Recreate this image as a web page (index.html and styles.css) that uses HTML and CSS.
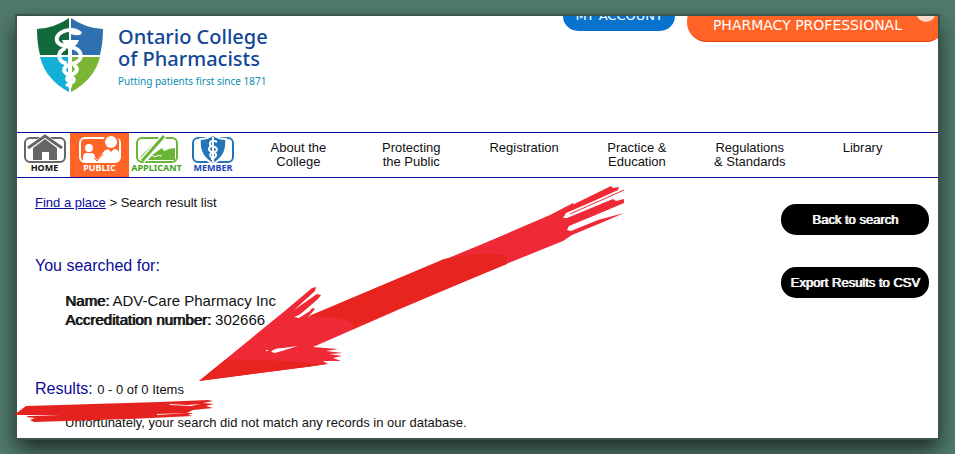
FILE: index.html
```html
<!DOCTYPE html>
<html lang="en">
<head>
    <meta charset="UTF-8">
    <meta name="viewport" content="width=device-width, initial-scale=1.0">
    <title>Search result list</title>
    <link rel="stylesheet" href="styles.css">
</head>
<body>
    <div class="sheet">
        <header class="header">
            <a class="logo" href="#">
                <svg class="shield" viewBox="0 0 66 74" width="66" height="74">
                    <path fill="#126a3c" d="M32 0V37H3Q0 25 0 11Q18 10 32 0Z"/>
                    <path fill="#2f70b0" d="M34 0V37H63Q66 25 66 11Q48 10 34 0Z"/>
                    <path fill="#12b0d6" d="M32 39V74Q9 62 3 39Z"/>
                    <path fill="#7ab536" d="M34 39V74Q57 62 63 39Z"/>
                    <path fill="#fff" d="M25 22H42Q40 28 35 29V68L33 74L31 68V29Q27 28 25 22Z"/>
                    <g fill="none" stroke="#fff" stroke-linecap="round">
                        <path stroke-width="4" d="M42 15C38 10 24 11 20 19C18 26 26 28 33 29C47 31 47 43 35 46C24 49 25 55 34 57"/>
                        <path stroke-width="4" d="M27 31C20 34 21 43 28 45M38 48C42 51 39 56 33 57"/>
                        <path stroke-width="3" d="M33 57C27 60 30 64 35 64M34 59Q40 61 35 65L30 67"/>
                    </g>
                    <path fill="#fff" d="M31 12Q41 9 45 15Q42 19 34 16Z"/>
                </svg>
                <span class="logo-text">
                    <span class="logo-name">Ontario College<br>of Pharmacists</span>
                    <span class="logo-tagline">Putting patients first since 1871</span>
                </span>
            </a>
            <div class="account-links">
                <a class="account" href="#">MY ACCOUNT</a>
                <a class="professional" href="#">PHARMACY PROFESSIONAL <span class="dot"></span></a>
            </div>
        </header>

        <div class="navbar">
            <nav class="tabs">
                <a class="tab home" href="#">
                    <svg viewBox="0 0 44 30" width="44" height="30">
                        <rect x="2" y="4" width="40" height="24" rx="5" fill="#fff" stroke="currentColor" stroke-width="2"/>
                        <path d="M5 16L22 3L39 16" fill="none" stroke="#fff" stroke-width="6"/>
                        <path d="M5 14L22 2L39 14" fill="none" stroke="currentColor" stroke-width="3"/>
                        <path fill="currentColor" d="M10 14L22 5L34 14V26H26V18H19V26H10Z"/>
                    </svg>
                    <span>HOME</span>
                </a>
                <a class="tab public" href="#">
                    <svg viewBox="0 0 44 30" width="44" height="30">
                        <rect x="2" y="4" width="40" height="24" rx="5" fill="none" stroke="#fff" stroke-width="2"/>
                        <circle cx="33" cy="8" r="8" fill="#ff6426"/>
                        <circle cx="33" cy="8" r="6" fill="#fff"/>
                        <circle cx="11" cy="14" r="4" fill="#fff"/>
                        <path fill="#fff" d="M5 27V23Q5 19 9 19H13Q17 19 17 23L19 26L24 20Q26 16 30 15L33 18L36 15Q41 15 41 20V27Z"/>
                        <path fill="none" stroke="#ff6426" d="M16 24L19 27L25 20"/>
                    </svg>
                    <span>PUBLIC</span>
                </a>
                <a class="tab applicant" href="#">
                    <svg viewBox="0 0 44 30" width="44" height="30">
                        <rect x="2" y="4" width="40" height="24" rx="5" fill="#fff" stroke="currentColor" stroke-width="2"/>
                        <path fill="currentColor" d="M17 21L27 14L29 17Q35 14 40 14V26H13ZM6 22L17 11Q21 9 20 13L9 26H5Z"/>
                        <path stroke="#fff" stroke-width="6" d="M7 27L29 2"/>
                        <path stroke="currentColor" stroke-width="3" d="M7 27L29 2"/>
                        <path stroke="#fff" d="M13 24Q17 20 20 23Q23 20 27 22" fill="none"/>
                    </svg>
                    <span>APPLICANT</span>
                </a>
                <a class="tab member" href="#">
                    <svg viewBox="0 0 44 30" width="44" height="30">
                        <rect x="2" y="4" width="40" height="24" rx="5" fill="#fff" stroke="currentColor" stroke-width="2"/>
                        <path fill="currentColor" stroke="#fff" stroke-width="2" d="M22 1Q28 5 35 5Q37 22 22 30Q7 22 9 5Q16 5 22 1Z"/>
                        <path fill="none" stroke="#fff" stroke-width="2" d="M22 3V28M26 8C20 5 17 9 20 12C28 13 27 18 22 18C17 20 19 24 24 24M20 12C16 15 18 18 24 19C27 21 24 24 20 25"/>
                    </svg>
                    <span>MEMBER</span>
                </a>
            </nav>
            <nav class="menu">
                <a href="#">About the<br>College</a>
                <a href="#">Protecting<br>the Public</a>
                <a href="#">Registration</a>
                <a href="#">Practice &amp;<br>Education</a>
                <a href="#">Regulations<br>&amp; Standards</a>
                <a href="#">Library</a>
            </nav>
        </div>

        <div class="content">
            <main class="results">
                <div class="breadcrumb"><a href="#">Find a place</a> &gt; Search result list</div>
                <h2>You searched for:</h2>
                <div class="criteria">
                    <div><span class="label">Name:</span> ADV-Care Pharmacy Inc</div>
                    <div><span class="label">Accreditation number:</span> 302666</div>
                </div>
                <h2 class="results-title">Results: <span class="count">0 - 0 of 0 Items</span></h2>
                <p class="message">Unfortunately, your search did not match any records in our database.</p>
            </main>
            <aside class="actions">
                <button type="button">Back to search</button>
                <button type="button">Export Results to CSV</button>
            </aside>
        </div>
    </div>

    <!-- red brush arrow and underline -->
    <svg class="marker" viewBox="0 0 955 454" width="955" height="454">
        <path fill="#ef2935" d="M199 381L286 310L312 288L316 287L315 291L294 310L317 294L321 295L318 299L297 317L313 308L315 309L308 317L400 278L480 245L550 215L573 203L574 204L560 211L611 186L613 188L619 187L618 190L596 200L566 213L563 218L567 218L613 199L616 201L624 199L624 203L598 214L569 226L567 230L571 231L598 220L624 213L608 220L572 235L563 241L506 264L400 309L313 347L325 348L338 349L326 351L343 353L329 354L342 356L333 358L341 361L323 361L328 364L314 366Z"/>
        <path fill="#e82420" d="M309 316L444 259Q480 252 506 255L507 264L400 308L350 330Q365 318 309 316ZM199 381L225 360Q275 359 325 364L314 366Z"/>
        <path fill="none" stroke="#ef2935" d="M570 214L624 190"/>
        <path fill="#fff" d="M271 352Q274 348 283 348L298 346L285 350L275 353ZM266 350H268V351H266ZM299 315L312 307L310 311L299 318L294 317Z"/>
        <path fill="#e4221f" d="M14 415L26 406L160 402L208 400L213 401L203 403L214 404L206 406L213 408L193 410L187 413H193L188 415L193 416L130 419L34 422L30 420L35 418L26 417L31 415Z"/>
        <path fill="#fff" d="M169 404L187 405L201 404L191 406L170 405ZM18 415L60 415L31 416H19ZM157 414L189 413L157 415Z"/>
    </svg>
</body>
</html>
```

FILE: styles.css
```css
* {
    box-sizing: border-box;
}
body {
    position: relative;
    display: flex;
    min-height: 100vh;
    margin: 0;
    padding: 16px 17px;
    background-color: #50796c;
    font-family: "Liberation Sans", Arial, sans-serif;
    font-size: 13px;
    line-height: 16px;
    color: #111;
}
a {
    color: inherit;
    text-decoration: none;
}
.sheet {
    flex: 1;
    overflow: hidden;
    background-color: #fff;
    box-shadow: 0 0 0 2px #3b544b, 0 10px 20px rgba(0, 0, 0, 0.7);
}
.header {
    display: flex;
    justify-content: space-between;
    align-items: flex-start;
    height: 116px;
    padding-left: 20px;
}
.logo {
    display: flex;
    gap: 15px;
    padding-top: 2px;
}
.logo-text {
    display: flex;
    flex-direction: column;
    gap: 4px;
    padding-top: 8px;
    font-family: "Noto Sans", sans-serif;
    white-space: nowrap;
}
.logo-name {
    font-size: 20px;
    font-weight: 500;
    line-height: 22px;
    color: #114795;
}
.logo-tagline {
    font-size: 10px;
    line-height: 14px;
    color: #0a8cb4;
}
.account-links {
    display: flex;
    align-items: flex-start;
    gap: 12px;
    margin-right: -8px;
    font-family: "DejaVu Sans", Verdana, sans-serif;
    color: #fff;
    white-space: nowrap;
}
.account {
    margin-top: -15px;
    padding: 7px 12px 8px;
    border-radius: 15px;
    background-color: #0873ce;
    line-height: 15px;
}
.professional {
    display: flex;
    gap: 14px;
    margin-top: -15px;
    padding: 16px 10px 8px 26px;
    border-radius: 20px;
    background-color: #ff6426;
    border-bottom: 1px solid #e03c10;
    font-size: 14px;
}
.dot {
    width: 20px;
    height: 20px;
    margin-top: -15px;
    border-radius: 50%;
    background-color: #ffd9c8;
}
.navbar {
    display: flex;
    height: 46px;
    border-top: 1px solid #0a0a96;
    border-bottom: 1px solid #0a0a96;
}
.tabs {
    display: grid;
    grid-template-columns: 53px 59px 55px 58px;
}
.tab {
    display: flex;
    flex-direction: column;
    align-items: center;
    padding-top: 1px;
    font-family: "Noto Sans", Verdana, sans-serif;
    font-size: 9px;
    font-weight: bold;
    line-height: 8px;
}
.tab svg {
    flex: none;
}
.home {
    padding-left: 2px;
    color: #666;
}
.home span {
    color: #111;
}
.public {
    background-color: #ff6426;
    color: #fff;
}
.applicant {
    color: #6ab436;
}
.applicant span {
    color: #45a01c;
}
.member {
    color: #2474b8;
}
.member span {
    color: #1a43b8;
}
.menu {
    flex: 1;
    display: grid;
    grid-template-columns: repeat(6, 1fr);
    padding: 8px 19px 0 0;
    line-height: 14px;
    text-align: center;
}
.content {
    display: flex;
    justify-content: space-between;
    padding: 0 9px 4px 18px;
}
.results {
    padding-top: 17px;
}
.breadcrumb a {
    color: #0a0aa0;
    text-decoration: underline;
}
h2 {
    margin: 45px 0 15px;
    font-size: 16px;
    font-weight: normal;
    line-height: 20px;
    color: #0a0a96;
}
.criteria {
    padding-left: 30px;
    font-size: 15px;
    line-height: 19px;
}
.label {
    text-shadow: 1px 0 0 #111;
}
.results-title {
    margin: 50px 0 15px;
}
.count {
    font-size: 13px;
    color: #111;
}
.message {
    margin: 0;
    padding-left: 30px;
}
.actions {
    display: flex;
    flex-direction: column;
    gap: 32px;
    padding-top: 26px;
}
.actions button {
    width: 148px;
    height: 31px;
    padding: 0;
    border: none;
    border-radius: 15px;
    background-color: #000;
    color: #fff;
    font-family: inherit;
    font-size: 13px;
    text-shadow: 1px 0 0 #fff;
    cursor: pointer;
}
.marker {
    position: absolute;
    top: 0;
    left: 0;
    pointer-events: none;
}
```
